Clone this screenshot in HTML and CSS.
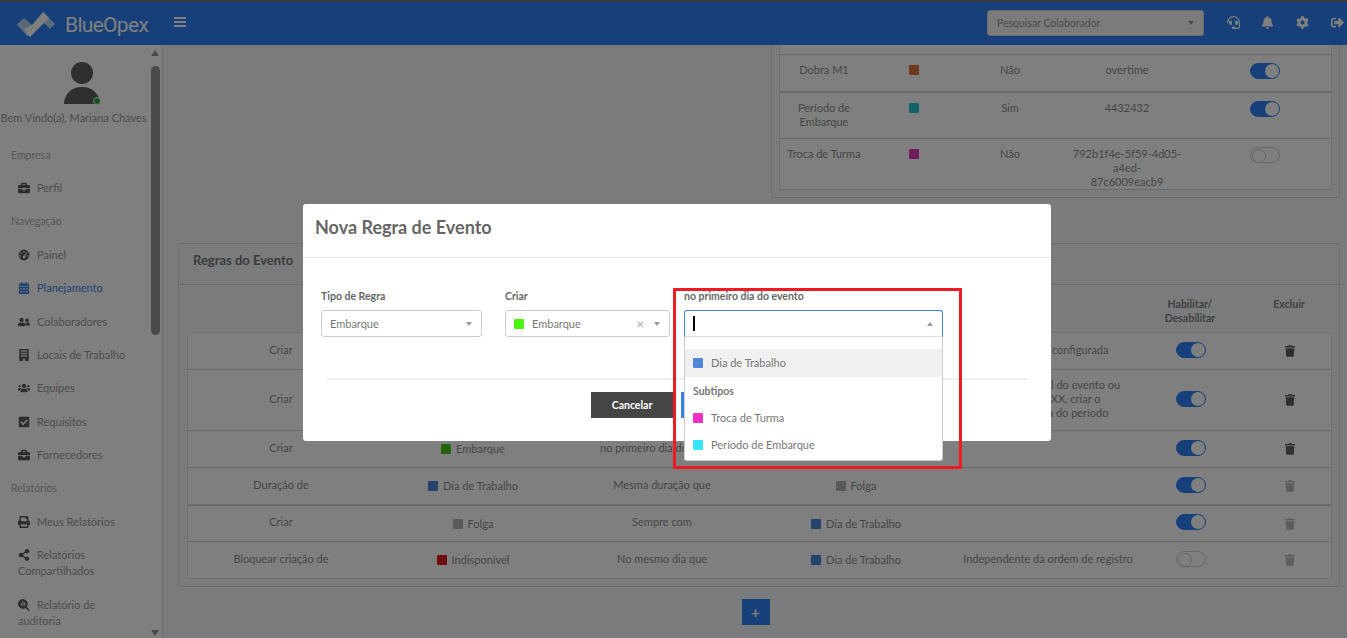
FILE: index.html
```html
<!DOCTYPE html>
<html lang="pt-BR">
<head>
<meta charset="utf-8">
<title>BlueOpex</title>
<link rel="stylesheet" href="styles.css">
</head>
<body>
<svg class="defs" aria-hidden="true">
  <symbol id="i-briefcase" viewBox="0 0 512 512"><path d="M320 336c0 8.8-7.2 16-16 16h-96c-8.8 0-16-7.2-16-16v-48H0v144c0 25.6 22.4 48 48 48h416c25.6 0 48-22.4 48-48V288H320v48zm144-208h-80V80c0-25.6-22.4-48-48-48H176c-25.6 0-48 22.4-48 48v48H48c-25.6 0-48 22.4-48 48v80h512v-80c0-25.6-22.4-48-48-48zm-144 0H192V96h128v32z"/></symbol>
  <symbol id="i-trash" viewBox="0 0 448 512"><path d="M432 32H312l-9.4-18.7A24 24 0 0 0 281.1 0H166.8a23.72 23.72 0 0 0-21.4 13.3L136 32H16A16 16 0 0 0 0 48v32a16 16 0 0 0 16 16h416a16 16 0 0 0 16-16V48a16 16 0 0 0-16-16zM53.2 467a48 48 0 0 0 47.9 45h245.8a48 48 0 0 0 47.9-45L416 128H32z"/></symbol>
  <symbol id="i-bell" viewBox="0 0 448 512"><path d="M224 512c35.32 0 63.97-28.65 63.97-64H160.03c0 35.35 28.65 64 63.97 64zm215.39-149.71c-19.32-20.76-55.47-51.99-55.47-154.29 0-77.7-54.48-139.9-127.94-155.16V32c0-17.67-14.32-32-31.98-32s-31.98 14.33-31.98 32v20.84C118.56 68.1 64.08 130.3 64.08 208c0 102.3-36.15 133.53-55.47 154.29-6 6.45-8.66 14.16-8.61 21.71.11 16.4 12.98 32 32.1 32h383.8c19.12 0 32-15.6 32.1-32 .05-7.55-2.61-15.27-8.61-21.71z"/></symbol>
  <symbol id="i-cog" viewBox="0 0 512 512"><path d="M487.4 315.7l-42.6-24.6c4.3-23.2 4.3-47 0-70.2l42.6-24.6c4.9-2.8 7.1-8.6 5.5-14-11.1-35.6-30-67.8-54.7-94.6-3.8-4.1-10-5.1-14.8-2.3L380.8 110c-17.9-15.4-38.5-27.3-60.8-35.1V25.8c0-5.6-3.9-10.5-9.4-11.7-36.7-8.2-74.3-7.8-109.2 0-5.5 1.2-9.4 6.1-9.4 11.7V75c-22.2 7.9-42.8 19.8-60.8 35.1L88.7 85.5c-4.9-2.8-11-1.9-14.8 2.3-24.7 26.7-43.6 58.9-54.7 94.6-1.7 5.4.6 11.2 5.5 14L67.3 221c-4.3 23.2-4.3 47 0 70.2l-42.6 24.6c-4.9 2.8-7.1 8.6-5.5 14 11.1 35.6 30 67.8 54.7 94.6 3.8 4.1 10 5.1 14.8 2.3l42.6-24.6c17.9 15.4 38.5 27.3 60.8 35.1v49.2c0 5.6 3.9 10.5 9.4 11.7 36.7 8.2 74.3 7.8 109.2 0 5.5-1.2 9.4-6.1 9.4-11.7v-49.2c22.2-7.9 42.8-19.8 60.8-35.1l42.6 24.6c4.9 2.8 11 1.9 14.8-2.3 24.7-26.7 43.6-58.9 54.7-94.6 1.5-5.5-.7-11.3-5.6-14.1zM256 336c-44.1 0-80-35.9-80-80s35.9-80 80-80 80 35.9 80 80-35.9 80-80 80z"/></symbol>
  <symbol id="i-signout" viewBox="0 0 512 512"><path d="M497 273L329 441c-15 15-41 4.5-41-17v-96H152c-13.3 0-24-10.7-24-24v-96c0-13.3 10.7-24 24-24h136V88c0-21.4 25.9-32 41-17l168 168c9.3 9.4 9.3 24.6 0 34zM192 436v-40c0-6.6-5.4-12-12-12H96c-17.7 0-32-14.3-32-32V160c0-17.7 14.3-32 32-32h84c6.6 0 12-5.4 12-12V76c0-6.6-5.4-12-12-12H96c-53 0-96 43-96 96v192c0 53 43 96 96 96h84c6.6 0 12-5.4 12-12z"/></symbol>
  <symbol id="i-headset" viewBox="0 0 512 512"><path d="M192 208c0-17.67-14.33-32-32-32h-16c-35.35 0-64 28.65-64 64v48c0 35.35 28.65 64 64 64h16c17.67 0 32-14.33 32-32V208zm176 144c35.35 0 64-28.65 64-64v-48c0-35.35-28.65-64-64-64h-16c-17.67 0-32 14.33-32 32v112c0 17.67 14.33 32 32 32h16zM256 0C113.18 0 4.58 118.83 0 256v16c0 8.84 7.16 16 16 16h16c8.84 0 16-7.16 16-16v-16c0-114.69 93.31-208 208-208s208 93.31 208 208h-.12c.08 2.43.12 165.72.12 165.72 0 23.35-18.93 42.28-42.28 42.28H320c0-26.51-21.49-48-48-48h-32c-26.51 0-48 21.49-48 48s21.49 48 48 48h181.72c49.86 0 90.28-40.42 90.28-90.28V256C507.42 118.83 398.82 0 256 0z"/></symbol>
  <symbol id="i-friends" viewBox="0 0 640 512"><path d="M192 256c61.9 0 112-50.1 112-112S253.9 32 192 32 80 82.1 80 144s50.1 112 112 112zm76.8 32h-8.3c-20.8 10-43.9 16-68.5 16s-47.6-6-68.5-16h-8.3C51.6 288 0 339.6 0 403.2V432c0 26.5 21.5 48 48 48h288c26.5 0 48-21.5 48-48v-28.8c0-63.6-51.6-115.2-115.2-115.2zM480 256c53 0 96-43 96-96s-43-96-96-96-96 43-96 96 43 96 96 96zm48 32h-3.8c-13.9 4.8-28.6 8-44.2 8s-30.3-3.2-44.2-8H432c-20.4 0-39.2 5.9-55.7 15.4 24.4 26.3 39.7 61.2 39.7 99.8v38.4c0 2.2-.5 4.3-.6 6.4H592c26.5 0 48-21.5 48-48 0-61.9-50.1-112-112-112z"/></symbol>
  <symbol id="i-users" viewBox="0 0 640 512"><path d="M96 224c35.3 0 64-28.7 64-64s-28.7-64-64-64-64 28.7-64 64 28.7 64 64 64zm448 0c35.3 0 64-28.7 64-64s-28.7-64-64-64-64 28.7-64 64 28.7 64 64 64zm32 32h-64c-17.6 0-33.5 7.1-45.1 18.6 40.3 22.1 68.9 62 75.1 109.4h66c17.7 0 32-14.3 32-32v-32c0-35.3-28.7-64-64-64zm-256 0c61.9 0 112-50.1 112-112S381.9 32 320 32 208 82.1 208 144s50.1 112 112 112zm76.8 32h-8.3c-20.8 10-43.9 16-68.5 16s-47.6-6-68.5-16h-8.3C179.6 288 128 339.6 128 403.2V432c0 26.5 21.5 48 48 48h288c26.5 0 48-21.5 48-48v-28.8c0-63.6-51.6-115.2-115.2-115.2zm-223.7-13.4C161.5 263.1 145.6 256 128 256H64c-35.3 0-64 28.7-64 64v32c0 17.7 14.3 32 32 32h65.9c6.3-47.4 34.9-87.3 75.2-109.4z"/></symbol>
  <symbol id="i-calendar" viewBox="0 0 448 512"><path d="M0 464c0 26.5 21.5 48 48 48h352c26.5 0 48-21.5 48-48V192H0v272zm320-196c0-6.6 5.4-12 12-12h40c6.6 0 12 5.4 12 12v40c0 6.6-5.4 12-12 12h-40c-6.6 0-12-5.4-12-12v-40zm0 128c0-6.6 5.4-12 12-12h40c6.6 0 12 5.4 12 12v40c0 6.6-5.4 12-12 12h-40c-6.6 0-12-5.4-12-12v-40zM192 268c0-6.6 5.4-12 12-12h40c6.6 0 12 5.4 12 12v40c0 6.6-5.4 12-12 12h-40c-6.6 0-12-5.4-12-12v-40zm0 128c0-6.6 5.4-12 12-12h40c6.6 0 12 5.4 12 12v40c0 6.6-5.4 12-12 12h-40c-6.6 0-12-5.4-12-12v-40zM64 268c0-6.6 5.4-12 12-12h40c6.6 0 12 5.4 12 12v40c0 6.6-5.4 12-12 12H76c-6.6 0-12-5.4-12-12v-40zm0 128c0-6.6 5.4-12 12-12h40c6.6 0 12 5.4 12 12v40c0 6.6-5.4 12-12 12H76c-6.6 0-12-5.4-12-12v-40zM400 64h-48V16c0-8.8-7.2-16-16-16h-32c-8.8 0-16 7.2-16 16v48H160V16c0-8.8-7.2-16-16-16h-32c-8.8 0-16 7.2-16 16v48H48C21.5 64 0 85.5 0 112v48h448v-48c0-26.5-21.5-48-48-48z"/></symbol>
  <symbol id="i-building" viewBox="0 0 448 512"><path fill-rule="evenodd" d="M24 0h400v512H272v-96h-96v96H24zM96 56v64h72V56zm92 0v64h72V56zm92 0v64h72V56zM96 160v64h72v-64zm92 0v64h72v-64zm92 0v64h72v-64zM96 264v64h72v-64zm92 0v64h72v-64zm92 0v64h72v-64z"/></symbol>
  <symbol id="i-check" viewBox="0 0 448 512"><path d="M400 480H48c-26.5 0-48-21.5-48-48V80c0-26.5 21.5-48 48-48h352c26.5 0 48 21.5 48 48v352c0 26.5-21.5 48-48 48zm-204.7-98.1l184-184c6.2-6.2 6.2-16.4 0-22.6l-22.6-22.6c-6.2-6.2-16.4-6.2-22.6 0L184 302.7l-70.1-70.1c-6.2-6.2-16.4-6.2-22.6 0l-22.6 22.6c-6.2 6.2-6.2 16.4 0 22.6l104 104c6.2 6.2 16.4 6.2 22.6 0z"/></symbol>
  <symbol id="i-print" viewBox="0 0 512 512"><path d="M448 192V77.25c0-8.49-3.37-16.62-9.37-22.63L393.37 9.37c-6-6-14.14-9.37-22.63-9.37H96C78.33 0 64 14.33 64 32v160c-35.35 0-64 28.65-64 64v112c0 8.84 7.16 16 16 16h48v96c0 17.67 14.33 32 32 32h320c17.67 0 32-14.33 32-32v-96h48c8.84 0 16-7.16 16-16V256c0-35.35-28.65-64-64-64zm-64 256H128v-96h256v96zm0-224H128V64h192v48c0 8.84 7.16 16 16 16h48v96zm48 72c-13.25 0-24-10.75-24-24 0-13.26 10.75-24 24-24s24 10.74 24 24c0 13.25-10.75 24-24 24z"/></symbol>
  <symbol id="i-share" viewBox="0 0 448 512"><path d="M352 320c-22.608 0-43.387 7.819-59.79 20.895l-102.486-64.054a96.551 96.551 0 0 0 0-41.683l102.486-64.054C308.613 184.181 329.392 192 352 192c53.019 0 96-42.981 96-96S405.019 0 352 0s-96 42.981-96 96c0 7.158.79 14.13 2.276 20.841L155.79 180.895C139.387 167.819 118.608 160 96 160c-53.019 0-96 42.981-96 96s42.981 96 96 96c22.608 0 43.387-7.819 59.79-20.895l102.486 64.054A96.301 96.301 0 0 0 256 416c0 53.019 42.981 96 96 96s96-42.981 96-96-42.981-96-96-96z"/></symbol>
  <symbol id="i-gauge" viewBox="0 0 512 512"><path fill-rule="evenodd" d="M256 24a232 232 0 1 0 0 464 232 232 0 0 0 0-464zM256 88a34 34 0 1 1 0 68 34 34 0 0 1 0-68zM128 136a34 34 0 1 1 0 68 34 34 0 0 1 0-68zM88 262a34 34 0 1 1 0 68 34 34 0 0 1 0-68zM424 262a34 34 0 1 1 0 68 34 34 0 0 1 0-68zM372 128l32 20-96 150a58 58 0 1 1-40-20z"/></symbol>
  <symbol id="i-audit" viewBox="0 0 512 512"><path fill-rule="evenodd" d="M208 0a208 208 0 1 0 118 379l110 111a32 32 0 0 0 46-46L372 333A208 208 0 0 0 208 0zM110 190h44v100h-44zM186 100h44v190h-44zM262 150h44v140h-44z"/></symbol>
  <symbol id="i-bars" viewBox="0 0 12 10"><path d="M0 0h12v2H0zM0 4h12v2H0zM0 8h12v2H0z"/></symbol>
</svg>

<div class="page">
  <header class="topbar">
    <div class="brand">
      <svg class="logo" viewBox="0 0 40 26" aria-hidden="true">
        <path class="logo-wing" d="M0 12.5 7 6l9 8-5 11z"/>
        <path class="logo-wing" d="M26 0 38 12l-5 5-7-7z"/>
        <path class="logo-main" d="M7 17.5l9-5.500L26 0l6 6-19 19z"/>
      </svg>
      <span class="brand-name">BlueOpex</span>
    </div>
    <svg class="menu-toggle"><use href="#i-bars"/></svg>
    <div class="top-actions">
      <div class="collab-select"><span>Pesquisar Colaborador</span><i class="caret"></i></div>
      <svg class="top-ic ic-a"><use href="#i-headset"/></svg>
      <svg class="top-ic ic-b"><use href="#i-bell"/></svg>
      <svg class="top-ic ic-c"><use href="#i-cog"/></svg>
      <svg class="top-ic ic-d"><use href="#i-signout"/></svg>
    </div>
  </header>

  <div class="shell">
    <aside class="sidebar">
      <div class="sidebar-scroll">
        <div class="profile">
          <div class="avatar">
            <span class="avatar-head"></span>
            <span class="avatar-body"></span>
            <span class="avatar-dot"></span>
          </div>
          <div class="welcome">Bem Vindo(a), Mariana Chaves</div>
        </div>
        <div class="nav-label">Empresa</div>
        <a class="nav-item"><svg class="nav-ic"><use href="#i-briefcase"/></svg>Perfil</a>
        <div class="nav-label">Navegação</div>
        <a class="nav-item"><svg class="nav-ic"><use href="#i-gauge"/></svg>Painel</a>
        <a class="nav-item active"><svg class="nav-ic"><use href="#i-calendar"/></svg>Planejamento</a>
        <a class="nav-item"><svg class="nav-ic"><use href="#i-friends"/></svg>Colaboradores</a>
        <a class="nav-item"><svg class="nav-ic"><use href="#i-building"/></svg>Locais de Trabalho</a>
        <a class="nav-item"><svg class="nav-ic"><use href="#i-users"/></svg>Equipes</a>
        <a class="nav-item"><svg class="nav-ic"><use href="#i-check"/></svg>Requisitos</a>
        <a class="nav-item"><svg class="nav-ic"><use href="#i-briefcase"/></svg>Fornecedores</a>
        <div class="nav-label">Relatórios</div>
        <a class="nav-item"><svg class="nav-ic"><use href="#i-print"/></svg>Meus Relatórios</a>
        <a class="nav-item"><svg class="nav-ic"><use href="#i-share"/></svg>Relatórios Compartilhados</a>
        <a class="nav-item"><svg class="nav-ic"><use href="#i-audit"/></svg>Relatório de auditoria</a>
      </div>
      <div class="scrollbar">
        <i class="sb-up"></i>
        <i class="sb-thumb"></i>
        <i class="sb-down"></i>
      </div>
    </aside>

    <main class="content">
      <div class="top-clip">
        <section class="card types-card">
          <div class="types-row first">
            <div>Troca de<br>Função</div><div></div><div></div><div></div><div></div>
          </div>
          <div class="types-row">
            <div>Dobra M1</div>
            <div><i class="sw c-orange"></i></div>
            <div>Não</div>
            <div>overtime</div>
            <div class="t-cell"><i class="toggle on"></i></div>
          </div>
          <div class="types-row heavy">
            <div>Período de<br>Embarque</div>
            <div><i class="sw c-teal"></i></div>
            <div>Sim</div>
            <div>4432432</div>
            <div class="t-cell"><i class="toggle on"></i></div>
          </div>
          <div class="types-row">
            <div>Troca de Turma</div>
            <div><i class="sw c-purple"></i></div>
            <div>Não</div>
            <div>792b1f4e-5f59-4d05-a4ed-<br>87c6009eacb9</div>
            <div class="t-cell"><i class="toggle"></i></div>
          </div>
        </section>
      </div>

      <section class="card rules-card">
        <h2 class="rules-title">Regras do Evento</h2>
        <div class="rules-body">
          <div class="rules-grid rules-head">
            <div></div><div></div><div></div><div></div><div></div>
            <div>Habilitar/<br>Desabilitar</div>
            <div>Excluir</div>
          </div>
          <div class="rules-table">
            <div class="rules-grid rule">
              <div>Criar</div>
              <div class="tag"><i class="sw c-green"></i>Embarque</div>
              <div>Sempre com</div>
              <div class="tag"><i class="sw c-blue"></i>Dia de Trabalho</div>
              <div>Na hora final configurada</div>
              <div><i class="toggle on"></i></div>
              <div><svg class="trash"><use href="#i-trash"/></svg></div>
            </div>
            <div class="rules-grid rule tall">
              <div>Criar</div>
              <div class="tag"><i class="sw c-gray"></i>Folga</div>
              <div>Ao final de</div>
              <div class="tag"><i class="sw c-blue"></i>Dia de Trabalho</div>
              <div>Se for o dia final do evento ou<br>se for após XX, criar o<br>evento no dia do período</div>
              <div><i class="toggle on"></i></div>
              <div><svg class="trash"><use href="#i-trash"/></svg></div>
            </div>
            <div class="rules-grid rule">
              <div>Criar</div>
              <div class="tag"><i class="sw c-green"></i>Embarque</div>
              <div>no primeiro dia do evento</div>
              <div class="tag"><i class="sw c-blue"></i>Dia de Trabalho</div>
              <div></div>
              <div><i class="toggle on"></i></div>
              <div><svg class="trash"><use href="#i-trash"/></svg></div>
            </div>
            <div class="rules-grid rule">
              <div>Duração de</div>
              <div class="tag"><i class="sw c-blue"></i>Dia de Trabalho</div>
              <div>Mesma duração que</div>
              <div class="tag"><i class="sw c-gray"></i>Folga</div>
              <div></div>
              <div><i class="toggle on"></i></div>
              <div><svg class="trash off"><use href="#i-trash"/></svg></div>
            </div>
            <div class="rules-grid rule heavy">
              <div>Criar</div>
              <div class="tag"><i class="sw c-gray"></i>Folga</div>
              <div>Sempre com</div>
              <div class="tag"><i class="sw c-blue"></i>Dia de Trabalho</div>
              <div></div>
              <div><i class="toggle on"></i></div>
              <div><svg class="trash off"><use href="#i-trash"/></svg></div>
            </div>
            <div class="rules-grid rule">
              <div>Bloquear criação de</div>
              <div class="tag"><i class="sw c-red"></i>Indisponível</div>
              <div>No mesmo dia que</div>
              <div class="tag"><i class="sw c-blue"></i>Dia de Trabalho</div>
              <div>Independente da ordem de registro</div>
              <div><i class="toggle"></i></div>
              <div><svg class="trash off"><use href="#i-trash"/></svg></div>
            </div>
          </div>
        </div>
      </section>

      <div class="add-row"><button class="add-btn">+</button></div>
    </main>
  </div>
</div>

<div class="backdrop"></div>

<div class="modal">
  <div class="modal-head">Nova Regra de Evento</div>
  <div class="modal-body">
    <div class="fields">
      <div class="field f-type">
        <label>Tipo de Regra</label>
        <div class="select"><span class="sel-text">Embarque</span><i class="caret"></i></div>
      </div>
      <div class="field f-create">
        <label>Criar</label>
        <div class="select"><i class="sw-m c-lime"></i><span class="sel-text">Embarque</span><span class="clear">×</span><i class="caret"></i></div>
      </div>
      <div class="field f-when">
        <label>no primeiro dia do evento</label>
        <div class="select open">
          <span class="text-cursor"></span><i class="caret up"></i>
          <div class="dropdown">
            <div class="opt hover"><i class="sw-m c-sblue"></i>Dia de Trabalho</div>
            <div class="opt-group">Subtipos</div>
            <div class="opt"><i class="sw-m c-pink"></i>Troca de Turma</div>
            <div class="opt"><i class="sw-m c-cyan"></i>Período de Embarque</div>
          </div>
        </div>
      </div>
    </div>
    <div class="modal-actions">
      <button class="btn btn-dark">Cancelar</button>
      <button class="btn btn-blue">Salvar</button>
    </div>
  </div>
</div>

<div class="annotation"></div>
</body>
</html>
```

FILE: styles.css
```css
* { box-sizing: border-box; }
html, body { margin: 0; height: 100%; overflow: hidden; }
body {
  position: relative;
  font-family: "Lato", "Noto Sans", sans-serif;
  font-size: 11px;
  line-height: 14px;
  color: #8c8c8c;
  background: #f4f6f9;
}
.defs { display: none; }
svg { fill: currentColor; display: block; }
i { display: block; font-style: normal; }

.page { display: flex; flex-direction: column; height: 638px; }

/* top bar */
.topbar {
  height: 45px;
  flex: none;
  display: flex;
  align-items: center;
  border-top: 2px solid #757575;
  background: #2e80f4;
  color: #fff;
}
.brand { width: 174px; flex: none; display: flex; align-items: center; padding-left: 17px; }
.logo { width: 40px; height: 26px; margin-top: 2px; }
.logo-wing { fill: #fff; opacity: .65; }
.logo-main { fill: #fff; }
.brand-name { margin-left: 8px; font-family: "Roboto", sans-serif; font-size: 21px; line-height: 26px; letter-spacing: -.7px; margin-top: 3px; }
.menu-toggle { width: 12px; height: 10px; margin-top: -4px; }
.top-actions { margin-left: auto; display: flex; align-items: center; margin-top: -2px; }
.collab-select {
  width: 217px; height: 26px;
  display: flex; align-items: center; justify-content: space-between;
  padding: 0 9px;
  background: #f7f7f7;
  border: 1px solid #d8d8d8;
  border-radius: 3px;
  color: #999;
  font-size: 10.5px;
}
.top-ic { width: 13px; height: 13px; }
.ic-a { margin-left: 23px; }
.ic-b { margin-left: 21px; }
.ic-c { margin-left: 22px; }
.ic-d { margin-left: 22px; margin-right: 3px; }

.caret { width: 0; height: 0; border: 3.5px solid transparent; border-top: 4px solid #999; border-bottom: 0; flex: none; }
.caret.up { border-top: 0; border-bottom: 4px solid #999; }

.shell { flex: 1; display: flex; min-height: 0; }

/* sidebar */
.sidebar {
  width: 163px; flex: none;
  position: relative;
  background: #fff;
  border-right: 1px solid #dcdcdc;
  overflow: hidden;
}
.profile { height: 93px; text-align: center; padding-top: 17px; }
.avatar { width: 36px; height: 43px; margin: 0 auto; position: relative; left: .5px; }
.avatar-head { display: block; width: 22px; height: 22px; border-radius: 50%; background: #5e5e5e; margin: 0 auto 3px 7px; }
.avatar-body { display: block; width: 36px; height: 17px; border-radius: 18px 18px 0 0; background: #5e5e5e; }
.avatar-dot { position: absolute; right: -1px; bottom: 0; width: 8px; height: 8px; border-radius: 50%; background: #25a244; border: 1px solid #eee; }
.welcome { margin-top: 6px; width: 147px; font-size: 11px; white-space: nowrap; color: #9a9a9a; }
.nav-label { height: 33.4px; padding: 9.7px 0 0 11px; color: #b0b0b0; font-size: 10.5px; }
.nav-item { display: block; padding: 8.7px 12px 8.7px 18px; line-height: 16px; color: #9a9a9a; font-size: 11px; width: 150px; }
.nav-item.active { color: #3b82e0; }
.nav-ic { display: inline-block; width: 12px; height: 12px; margin-right: 7px; vertical-align: -2px; color: #5a5a5a; }
.nav-item.active .nav-ic { color: #3b82e0; }

.scrollbar { position: absolute; top: 0; bottom: 0; left: 151px; width: 9px; }
.sb-up, .sb-down { position: absolute; left: 0; width: 0; height: 0; border: 4.5px solid transparent; }
.sb-up { top: 5px; border-top: 0; border-bottom: 6px solid #949494; }
.sb-down { bottom: 2px; border-bottom: 0; border-top: 6px solid #949494; }
.sb-thumb { position: absolute; top: 21px; left: 0; width: 9px; height: 269px; border-radius: 5px; background: #949494; }

/* content */
.content { flex: 1; min-width: 0; display: flex; flex-direction: column; padding: 0 7px 0 15px; }
.top-clip { height: 153px; flex: none; overflow: hidden; display: flex; flex-direction: column; justify-content: flex-end; }
.card { background: #f4f6f9; border: 1px solid #d8d8d8; border-radius: 3px; }
.types-card { width: 569px; flex: none; align-self: flex-end; padding: 0 7px 7px; border-top: 0; }
.types-row {
  display: grid;
  grid-template-columns: 88px 92px 100px 134px 1fr;
  min-height: 47px;
  padding-top: 8px;
  background: #fff;
  border-top: 1px solid #d6d6d6;
  border-left: 1px solid #e2e2e2;
  border-right: 1px solid #e2e2e2;
  text-align: center;
}
.types-row:nth-child(2) { min-height: 37px; }
.types-row.first { border-top: 0; height: 40px; min-height: 40px; padding-top: 0; }
.types-row:last-child { min-height: 46px; border-bottom: 1px solid #d6d6d6; border-radius: 0 0 3px 3px; }
.types-row.heavy { border-top-width: 2px; }
.t-cell { padding-left: 5px; }
.types-row .sw { margin: 2px auto 0; }
.types-row .toggle { margin: 0 auto; }

.rules-card { margin-top: 45px; height: 344px; flex: none; }
.rules-title { margin: 0; height: 41px; padding: 8px 14px 0; font-size: 13px; line-height: 16px; font-weight: 700; color: #777; border-bottom: 1px solid #d8d8d8; }
.rules-body { padding: 0 7px 8px 8px; }
.rules-grid { display: grid; grid-template-columns: 186px 198px 180px 208px 176px 110px 88px; align-items: center; text-align: center; }
.rules-head { height: 47px; padding-top: 12px; align-items: start; font-weight: 700; color: #808080; font-size: 10.5px; }
.rules-table { background: #fff; border: 1px solid #e2e2e2; border-radius: 3px; }
.rule { min-height: 37px; padding-bottom: 3px; border-top: 1px solid #d6d6d6; }
.rule:first-child { border-top: 0; min-height: 36px; }
.rule.tall { min-height: 61px; }
.rule.heavy { border-top-width: 2px; }
.tag { display: flex; align-items: center; justify-content: center; gap: 5px; padding-top: 3px; }
.sw { width: 10px; height: 10px; border-radius: 1px; flex: none; }
.toggle {
  width: 30px; height: 16px; margin: 0 auto;
  position: relative;
  border-radius: 8px;
  border: 1px solid #d0d0d0;
  background: #fff;
}
.toggle::after { content: ""; position: absolute; top: 1px; left: 1px; width: 12px; height: 12px; border-radius: 50%; background: #fff; border: 1px solid #ccc; }
.toggle.on { background: #2e80f4; border-color: #2e80f4; }
.toggle.on::after { left: auto; right: 0; top: 0; width: 14px; height: 14px; border: 0; background: #fff; }
.trash { width: 10px; height: 12px; margin: 3px auto 0; color: #5e5e5e; }
.trash.off { color: #bbb; }

.c-orange { background: #e2703a; }
.c-teal { background: #2bc4d6; }
.c-purple { background: #d93bb8; }
.c-green { background: #46c91a; }
.c-blue { background: #4f86d8; }
.c-gray { background: #b3b3b3; }
.c-red { background: #e11d1d; }

.add-row { display: flex; justify-content: center; padding-top: 12px; padding-right: 7px; }
.add-btn { width: 28px; height: 26px; padding: 0; border: 0; background: #2e80f4; color: #fff; font: 700 16px/26px "Lato", sans-serif; }

/* modal layer */
.backdrop { position: absolute; inset: 0; background: rgba(0, 0, 0, .5); }
.modal {
  position: absolute; left: 303px; top: 204px;
  width: 748px; height: 237px;
  background: #fff;
  border-radius: 3px;
  color: #777;
}
.modal-head { height: 54px; padding: 13px 12px 0; font-size: 18px; line-height: 20px; font-weight: 700; color: #666; border-bottom: 1px solid #e5e5e5; }
.modal-body { padding: 31px 18px 0; }
.fields { display: flex; }
.field label { display: block; height: 21px; font-weight: 700; font-size: 10.5px; color: #666; }
.f-type { width: 161px; margin-right: 23px; }
.f-create { width: 165px; margin-right: 14px; }
.f-when { width: 259px; }
.select {
  height: 27px;
  position: relative;
  display: flex; align-items: center;
  padding: 0 9px 0 8px;
  border: 1px solid #ccc;
  border-radius: 3px;
  font-size: 11px;
  color: #777;
}
.select .caret { margin-left: auto; }
.select.open { border-color: #3b82e0; border-bottom-color: #ddd; border-radius: 3px 3px 0 0; }
.text-cursor { width: 2px; height: 15px; background: #000; }
.sw-m { width: 10px; height: 10px; border-radius: 1px; margin-right: 8px; flex: none; }
.c-lime { background: #4bf20f; }
.c-sblue { background: #4f86d8; }
.c-pink { background: #ee2fc4; }
.c-cyan { background: #35e6fb; }
.clear { margin-left: auto; margin-right: 10px; color: #aaa; font-size: 13px; }
.clear + .caret { margin-left: 0; }
.dropdown {
  position: absolute; left: -1px; right: -1px; top: 26px;
  height: 124px;
  padding-top: 12px;
  background: #fff;
  border: 1px solid #ccc;
  border-top: 0;
  border-radius: 0 0 3px 3px;
  z-index: 2;
}
.opt { height: 27.5px; display: flex; align-items: center; padding-left: 8px; }
.opt.hover { background: #f0f0f0; }
.opt-group { height: 27.5px; padding: 7px 8px 0; font-weight: 700; color: #777; font-size: 10.5px; }
.modal-actions {
  margin: 41px 6px 0;
  padding-top: 12px;
  border-top: 2px solid #eee;
  display: flex; justify-content: center; gap: 7px;
}
.btn { width: 83px; height: 26px; padding: 0; border: 0; font: 700 10.5px/26px "Lato", sans-serif; color: #fff; }
.btn-dark { background: #454545; }
.btn-blue { background: #3b82e0; }

.annotation {
  position: absolute; left: 673px; top: 288px;
  width: 289px; height: 181px;
  border: 3px solid #ed1c24;
}
```
